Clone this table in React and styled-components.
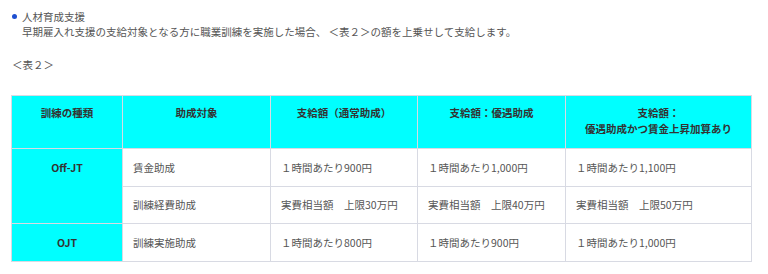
import styled, { createGlobalStyle } from "styled-components"

const GlobalStyle = createGlobalStyle`
  body {
    margin: 0;
    background: #fff;
    font-family: "Noto Sans CJK JP", "Noto Sans", sans-serif;
    font-size: 10.5px;
    color: #555;
  }
`

export const Page = styled.div`
  padding: 8.5px 11px 0 11px;
`

export const List = styled.ul`
  list-style: none;
  margin: 0;
  padding: 0 0 0 11px;
  line-height: 15px;
`

export const Item = styled.li`
  position: relative;
  &::before {
    content: "";
    position: absolute;
    left: -10px;
    top: 5.5px;
    width: 5px;
    height: 5px;
    border-radius: 50%;
    background: #1e4fd0;
  }
`

export const Caption = styled.p`
  margin: 18px 0 0 1px;
  line-height: 15px;
`

export const Table = styled.table`
  margin-top: 23.5px;
  width: 740px;
  border-collapse: collapse;
  table-layout: fixed;
  line-height: 16px;
`

export const Head = styled.th`
  background: #00ffff;
  color: #333;
  font-weight: bold;
  text-align: center;
  vertical-align: top;
  height: 53px;
  box-sizing: border-box;
  padding: 9px 8px 0;
  border: 1px solid #d8dae3;
`

export const Kind = styled.td`
  background: #00ffff;
  color: #333;
  font-weight: bold;
  text-align: center;
  vertical-align: ${(p) => (p.top ? "top" : "middle")};
  padding: ${(p) => (p.top ? "11px 8px 0" : "0 8px")};
  border: 1px solid #d8dae3;
`

export const Cell = styled.td`
  vertical-align: middle;
  padding: 0 10px;
  border: 1px solid #d8dae3;
  white-space: nowrap;
`

export const Row = styled.tr`
  height: ${(p) => p.h}px;
`

const rows = [
  { kind: "Off-JT", span: 2, target: "賃金助成", vals: ["１時間あたり900円", "１時間あたり1,000円", "１時間あたり1,100円"], h: 38 },
  { target: "訓練経費助成", vals: ["実費相当額　上限30万円", "実費相当額　上限40万円", "実費相当額　上限50万円"], h: 37 },
  { kind: "OJT", target: "訓練実施助成", vals: ["１時間あたり800円", "１時間あたり900円", "１時間あたり1,000円"], h: 38 },
]

const App = () => {
  return (
    <Page>
      <GlobalStyle />
      <List>
        <Item>
          人材育成支援
          <br />
          早期雇入れ支援の支給対象となる方に職業訓練を実施した場合、 ＜表２＞の額を上乗せして支給します。
        </Item>
      </List>
      <Caption>＜表２＞</Caption>
      <Table>
        <colgroup>
          <col style={{ width: 111 }} />
          <col style={{ width: 148 }} />
          <col style={{ width: 147 }} />
          <col style={{ width: 148 }} />
          <col style={{ width: 186 }} />
        </colgroup>
        <thead>
          <tr>
            <Head>訓練の種類</Head>
            <Head>助成対象</Head>
            <Head>支給額（通常助成）</Head>
            <Head>支給額：優遇助成</Head>
            <Head>
              支給額：
              <br />
              優遇助成かつ賃金上昇加算あり
            </Head>
          </tr>
        </thead>
        <tbody>
          {rows.map((r) => (
            <Row key={r.target} h={r.h}>
              {r.kind && (
                <Kind rowSpan={r.span || 1} top={r.span > 1}>
                  {r.kind}
                </Kind>
              )}
              <Cell>{r.target}</Cell>
              {r.vals.map((v, i) => (
                <Cell key={i}>{v}</Cell>
              ))}
            </Row>
          ))}
        </tbody>
      </Table>
    </Page>
  )
}

export default App
